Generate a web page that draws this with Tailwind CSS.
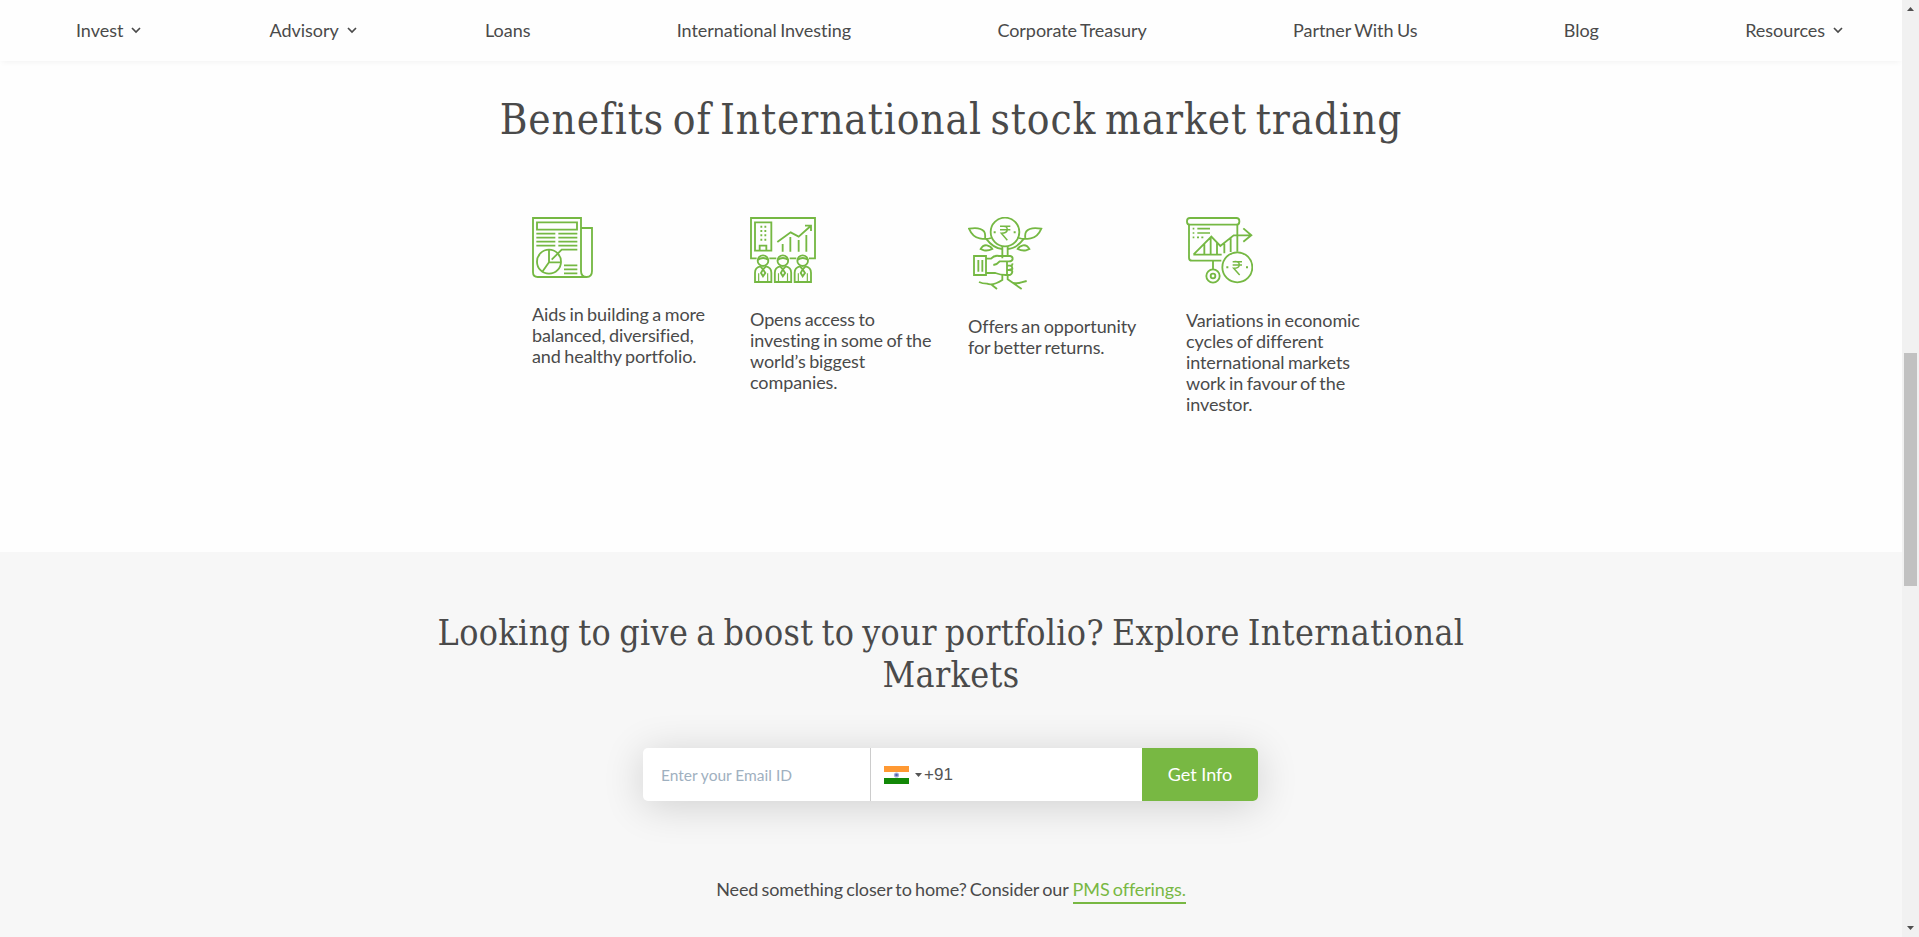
<!DOCTYPE html>
<html lang="en">
<head>
<meta charset="utf-8">
<title>International Investing</title>
<script src="https://cdn.jsdelivr.net/npm/@tailwindcss/browser@4"></script>
</head>
<body class="flex h-[937px] w-[1919px] overflow-hidden bg-[#fefefe] font-['Lato',sans-serif] text-[18px] text-[#4a4a4a]">
<div class="flex w-[1902px] flex-col">
  <header class="h-[61px] shrink-0 shadow-[0_3px_6px_-2px_rgba(0,0,0,0.05)]">
    <nav class="flex h-[60px] items-center justify-between pr-[77px] pl-[76px] whitespace-nowrap tracking-[-0.04px] [word-spacing:-1px]">
      <a class="relative">Invest<svg class="absolute top-[10px] left-full ml-[8px] h-[7px] w-[10px]" viewBox="0 0 10 7" fill="none" stroke="#4a4a4a" stroke-width="1.7"><path d="M1 1l4 4 4-4"/></svg></a>
      <a class="relative">Advisory<svg class="absolute top-[10px] left-full ml-[8px] h-[7px] w-[10px]" viewBox="0 0 10 7" fill="none" stroke="#4a4a4a" stroke-width="1.7"><path d="M1 1l4 4 4-4"/></svg></a>
      <a>Loans</a>
      <a>International Investing</a>
      <a>Corporate Treasury</a>
      <a>Partner With Us</a>
      <a>Blog</a>
      <a class="relative">Resources<svg class="absolute top-[10px] left-full ml-[8px] h-[7px] w-[10px]" viewBox="0 0 10 7" fill="none" stroke="#4a4a4a" stroke-width="1.7"><path d="M1 1l4 4 4-4"/></svg></a>
    </nav>
  </header>
  <section class="flex h-[491px] shrink-0 flex-col items-center">
    <h1 class="mt-[35px] h-[48px] text-center font-['DejaVu_Serif_Condensed','DejaVu_Serif',serif] text-[42px] leading-[48px] tracking-[0.87px] whitespace-nowrap [word-spacing:-4.2px]">Benefits of International stock market trading</h1>
    <div class="mt-[73px] grid w-[838px] grid-cols-[repeat(4,218px)] leading-[21px] tracking-[-0.1px] whitespace-nowrap [word-spacing:-1px]">
      <div>
        <svg class="h-[61px] w-[61px]" viewBox="36 36 183 183" fill="none" stroke="#75b843" stroke-width="5.5">
          <path d="M183 69V39H39V202Q39 216 53 216H201M183 69V198Q183 216 200 216Q216 216 216 198V69H183"/>
          <path d="M51 52H171V74H51zM49 86H106M49 98H106M49 110H106M49 122H106M115 86H172M115 98H172M115 110H172M115 122H172M172 134H125L95 164M132 181H172M132 193H172M132 205H172"/>
          <circle cx="87" cy="170" r="36"/><path d="M87 134V172H123M87 172L67 200"/>
        </svg>
        <p class="mt-[26px]">Aids in building a more<br>balanced, diversified,<br>and healthy portfolio.</p>
      </div>
      <div>
        <svg class="h-[66px] w-[66px]" viewBox="30 36 198 198" fill="none" stroke="#75b843" stroke-width="5.5">
          <path d="M50 160H33V39H225V160H207M88 160H109M149 160H169"/>
          <path d="M45 52H94V137H45zM59 137V122H79V137"/>
          <path stroke-dasharray="6 7" d="M64 62V108M76 62V108"/>
          <path d="M112 111L152 82L176 95L212 63M195 62H213V78M128 117V140M151 96V140M176 105V140M199 90V140"/>
          <g id="person"><path d="M45 231V203Q45 187 61 184L69 193L78 184Q94 187 94 203V231zM69 193L63 204L69 214L76 204zM53 165Q69 153 86 165" /><circle cx="69" cy="167" r="16"/><path d="M56 205V230M83 205V230" stroke-width="3.5"/></g>
          <use href="#person" x="59.5"/><use href="#person" x="119"/>
        </svg>
        <p class="mt-[26px]">Opens access to<br>investing in some of the<br>world’s biggest<br>companies.</p>
      </div>
      <div>
        <svg class="h-[73px] w-[75px]" viewBox="30 36 225 219" fill="none" stroke="#75b843" stroke-width="5.5">
          <circle cx="141" cy="81" r="43"/>
          <path stroke-width="4.5" d="M126 64H157M126 74H157M130 64Q148 61 148 74Q147 85 130 85L148 106"/>
          <path stroke-width="6" d="M110 79v6M170 79v6"/>
          <path d="M99 99Q85 104 65 100Q44 97 33 71Q66 65 78 79Q83 87 81 99M183 99Q197 104 218 100Q239 97 250 71Q216 65 205 79Q200 87 202 99"/>
          <path d="M68 132Q75 119 87 121Q99 124 103 132Q91 138 78 136zM214 132Q207 119 195 121Q183 124 179 132Q191 138 204 136zM84 101Q108 132 133 132M198 101Q174 132 149 132"/>
          <path d="M133 124V160M149 124V154M48 153H84V210H48zM61 165V200M73 165V200M86 161H99Q109 150 123 153H157Q164 154 164 162Q163 169 153 169H125Q118 178 106 180M86 204H112Q127 210 143 210H156Q163 207 163 199Q162 195 154 195H147M147 169V210M147 182H157Q164 182 163 175M157 182Q164 184 163 192L153 195"/>
          <path d="M133 210V225Q105 243 87 236Q73 236 63 231M101 239L117 252M149 210V223L191 252M166 234Q181 236 190 232L206 228"/>
        </svg>
        <p class="mt-[26px]">Offers an opportunity<br>for better returns.</p>
      </div>
      <div>
        <svg class="h-[67px] w-[67px]" viewBox="30 36 201 201" fill="none" stroke="#75b843" stroke-width="5.5">
          <rect x="33" y="39" width="157" height="20" rx="9"/>
          <path d="M39 60V158Q39 167 48 167H136M184 60V140M52 149H137M53 148L106 95L133 123L173 91H226M202 70L226 91L202 110M85 117V148M104 97V148M123 114V148M145 116V145M164 100V141M111 168V193"/>
          <path stroke-width="5" d="M50 71h5M64 71h38M50 84h5M64 84h38M50 97h5M63 97h6M76 97h6"/>
          <circle cx="111" cy="213" r="20"/><circle cx="111" cy="213" r="7"/>
          <circle cx="184" cy="187" r="45" fill="#fefefe"/>
          <path stroke-width="4.5" d="M170 170H198M170 180H198M174 170Q190 168 190 180Q189 190 173 190L191 210"/>
          <path stroke-width="6" d="M154 184v6M213 184v6"/>
        </svg>
        <p class="mt-[26px]">Variations in economic<br>cycles of different<br>international markets<br>work in favour of the<br>investor.</p>
      </div>
    </div>
  </section>
  <section class="flex flex-1 flex-col items-center bg-[#f7f7f7]">
    <h2 class="mt-[60px] text-center font-['DejaVu_Serif_Condensed','DejaVu_Serif',serif] text-[35.5px] leading-[42px] tracking-[0.36px] whitespace-nowrap [word-spacing:-2.5px]">Looking to give a boost to your portfolio? Explore International<br>Markets</h2>
    <form class="mt-[52px] mr-px flex h-[53px] w-[615px] rounded-[5px] bg-white shadow-[0_5px_40px_rgba(0,0,0,0.16)]">
      <div class="flex w-[228px] items-center border-r border-[#ccc] pt-[2px] pl-[18px] text-[15.5px] text-[#9fb0c0]">Enter your Email ID</div>
      <div class="flex flex-1 items-center pl-[13px]">
        <svg class="h-[18px] w-[25px]" viewBox="0 0 25 18"><path fill="#fff" d="M0 0h25v18H0z"/><path fill="#ff9933" d="M0 0h25v6H0z"/><path fill="#128807" d="M0 12h25v6H0z"/><circle cx="12.5" cy="9" r="2.6" fill="#a4acd8"/><circle cx="12.5" cy="9" r="1.3" fill="#5364ad"/></svg>
        <svg class="ml-[6px] h-[4px] w-[7px]" viewBox="0 0 7 4"><path fill="#555" d="M0 0h7L3.500 4z"/></svg>
        <span class="ml-[2px] font-['Liberation_Sans',sans-serif] text-[17px] text-[#555]">+91</span>
      </div>
      <button class="w-[116px] rounded-r-[5px] bg-[#78b843] text-white" type="button">Get Info</button>
    </form>
    <p class="mt-[75px] flex gap-[4px] leading-[26px] tracking-[-0.12px] whitespace-nowrap [word-spacing:-1.2px]"><span>Need something closer to home? Consider our</span><a class="h-[28px] border-b-2 border-[#78b843] text-[#78b843]">PMS offerings.</a></p>
  </section>
</div>
<aside class="flex w-[17px] flex-col items-center bg-[#f1f1f1]">
  <svg class="mt-[7px] h-[4px] w-[7px]" viewBox="0 0 7 4"><path fill="#505050" d="M0 4h7L3.500 0z"/></svg>
  <div class="mt-[342px] h-[233px] w-[13px] bg-[#c1c1c1]"></div>
  <svg class="mt-auto mb-[7px] h-[4px] w-[7px]" viewBox="0 0 7 4"><path fill="#505050" d="M0 0h7L3.500 4z"/></svg>
</aside>
</body>
</html>
